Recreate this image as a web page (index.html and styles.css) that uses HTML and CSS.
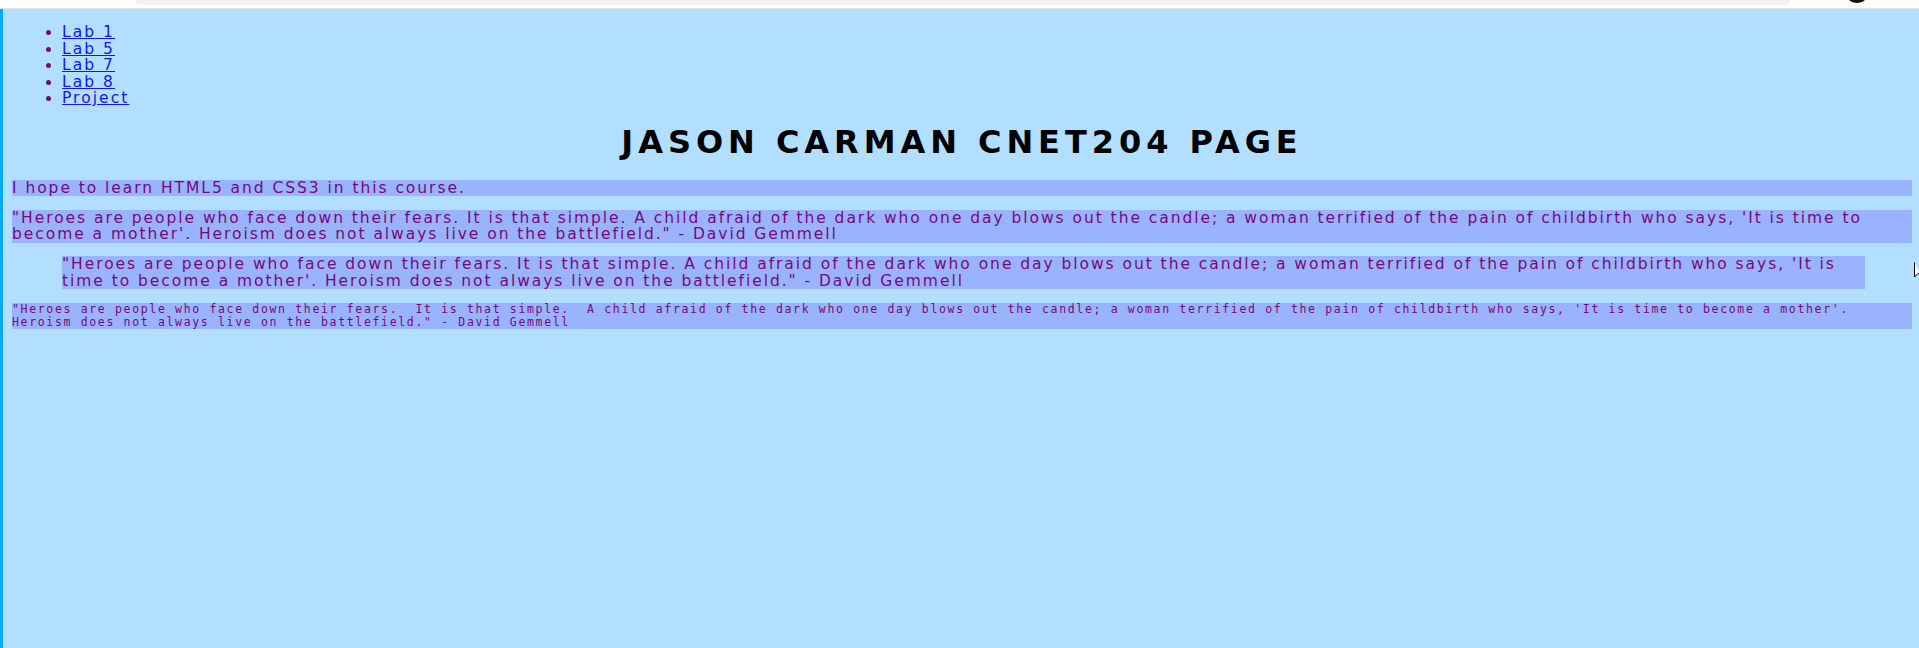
FILE: index.html
```html
<!DOCTYPE html>
<html lang="en">
<head>
<meta charset="utf-8">
<title>Jason Carman CNET204 Page</title>
<link rel="stylesheet" href="styles.css">
</head>
<body>
<div class="chrome">
  <div class="urlbar"></div>
  <div class="avatar"></div>
</div>
<div class="frame">
  <div class="edge"></div>
  <main class="page">
    <ul class="nav">
      <li><a href="#">Lab 1</a></li>
      <li><a href="#">Lab 5</a></li>
      <li><a href="#">Lab 7</a></li>
      <li><a href="#">Lab 8</a></li>
      <li><a href="#">Project</a></li>
    </ul>
    <h1 class="title">JASON CARMAN CNET204 PAGE</h1>
    <p class="box">I hope to learn HTML5 and CSS3 in this course.</p>
    <p class="box">"Heroes are people who face down their fears. It is that simple. A child afraid of the dark who one day blows out the candle; a woman terrified of the pain of childbirth who says, 'It is time to become a mother'. Heroism does not always live on the battlefield." - David Gemmell</p>
    <blockquote class="box quote">"Heroes are people who face down their fears. It is that simple. A child afraid of the dark who one day blows out the candle; a woman terrified of the pain of childbirth who says, 'It is time to become a mother'. Heroism does not always live on the battlefield." - David Gemmell</blockquote>
    <pre class="box mono">"Heroes are people who face down their fears.  It is that simple.  A child afraid of the dark who one day blows out the candle; a woman terrified of the pain of childbirth who says, 'It is time to become a mother'.
Heroism does not always live on the battlefield." - David Gemmell</pre>
  </main>
  <svg class="cursor" width="6" height="16" viewBox="0 0 6 16"><path d="M0.5 0.5 L0.5 15 L4 11.5 L6 11.5" fill="#fff" stroke="#000" stroke-width="1"/></svg>
</div>
</body>
</html>
```
FILE: styles.css
```css
html, body {
  margin: 0;
  padding: 0;
  height: 100%;
}
body {
  background: #b2dfff;
  font-family: "DejaVu Sans", Verdana, sans-serif;
  overflow: hidden;
}
.chrome {
  height: 8px;
  background: #ffffff;
  border-bottom: 1px solid #dfe3e8;
  position: relative;
  overflow: hidden;
}
.urlbar {
  margin-left: 135px;
  width: 1655px;
  height: 5px;
  background: #f0f2f4;
  border-radius: 0 0 10px 10px;
}
.avatar {
  position: absolute;
  left: 1848px;
  top: -9px;
  width: 18px;
  height: 12px;
  border-radius: 50%;
  background: #111;
}
.frame {
  display: flex;
  min-height: 639px;
  position: relative;
}
.edge {
  width: 3px;
  flex: none;
  background: #06aaf5;
}
.page {
  flex: 1;
  padding: 0 7px 0 9px;
  color: #780a78;
}
.nav {
  margin: 15px 0 0;
  padding-left: 50px;
  font-size: 15.5px;
  line-height: 16.5px;
  letter-spacing: 2.05px;
}
.nav a {
  color: #1515ee;
}
.title {
  margin: 18.6px 0 0;
  text-align: center;
  color: #000;
  font-size: 32px;
  line-height: 35px;
  font-weight: bold;
  letter-spacing: 4.95px;
}
.box {
  background: #99b3ff;
  font-size: 15.5px;
  line-height: 16.5px;
  letter-spacing: 1.95px;
  margin: 13.5px 0 0;
}
.title + .box {
  margin-top: 19.9px;
}
.quote {
  margin: 13.5px 47px 0 50px;
}
.mono {
  font-family: "DejaVu Sans Mono", "Liberation Mono", monospace;
  font-size: 11.5px;
  line-height: 13px;
  letter-spacing: 1.66px;
}
.cursor {
  position: absolute;
  left: 1914px;
  top: 253px;
}
```
